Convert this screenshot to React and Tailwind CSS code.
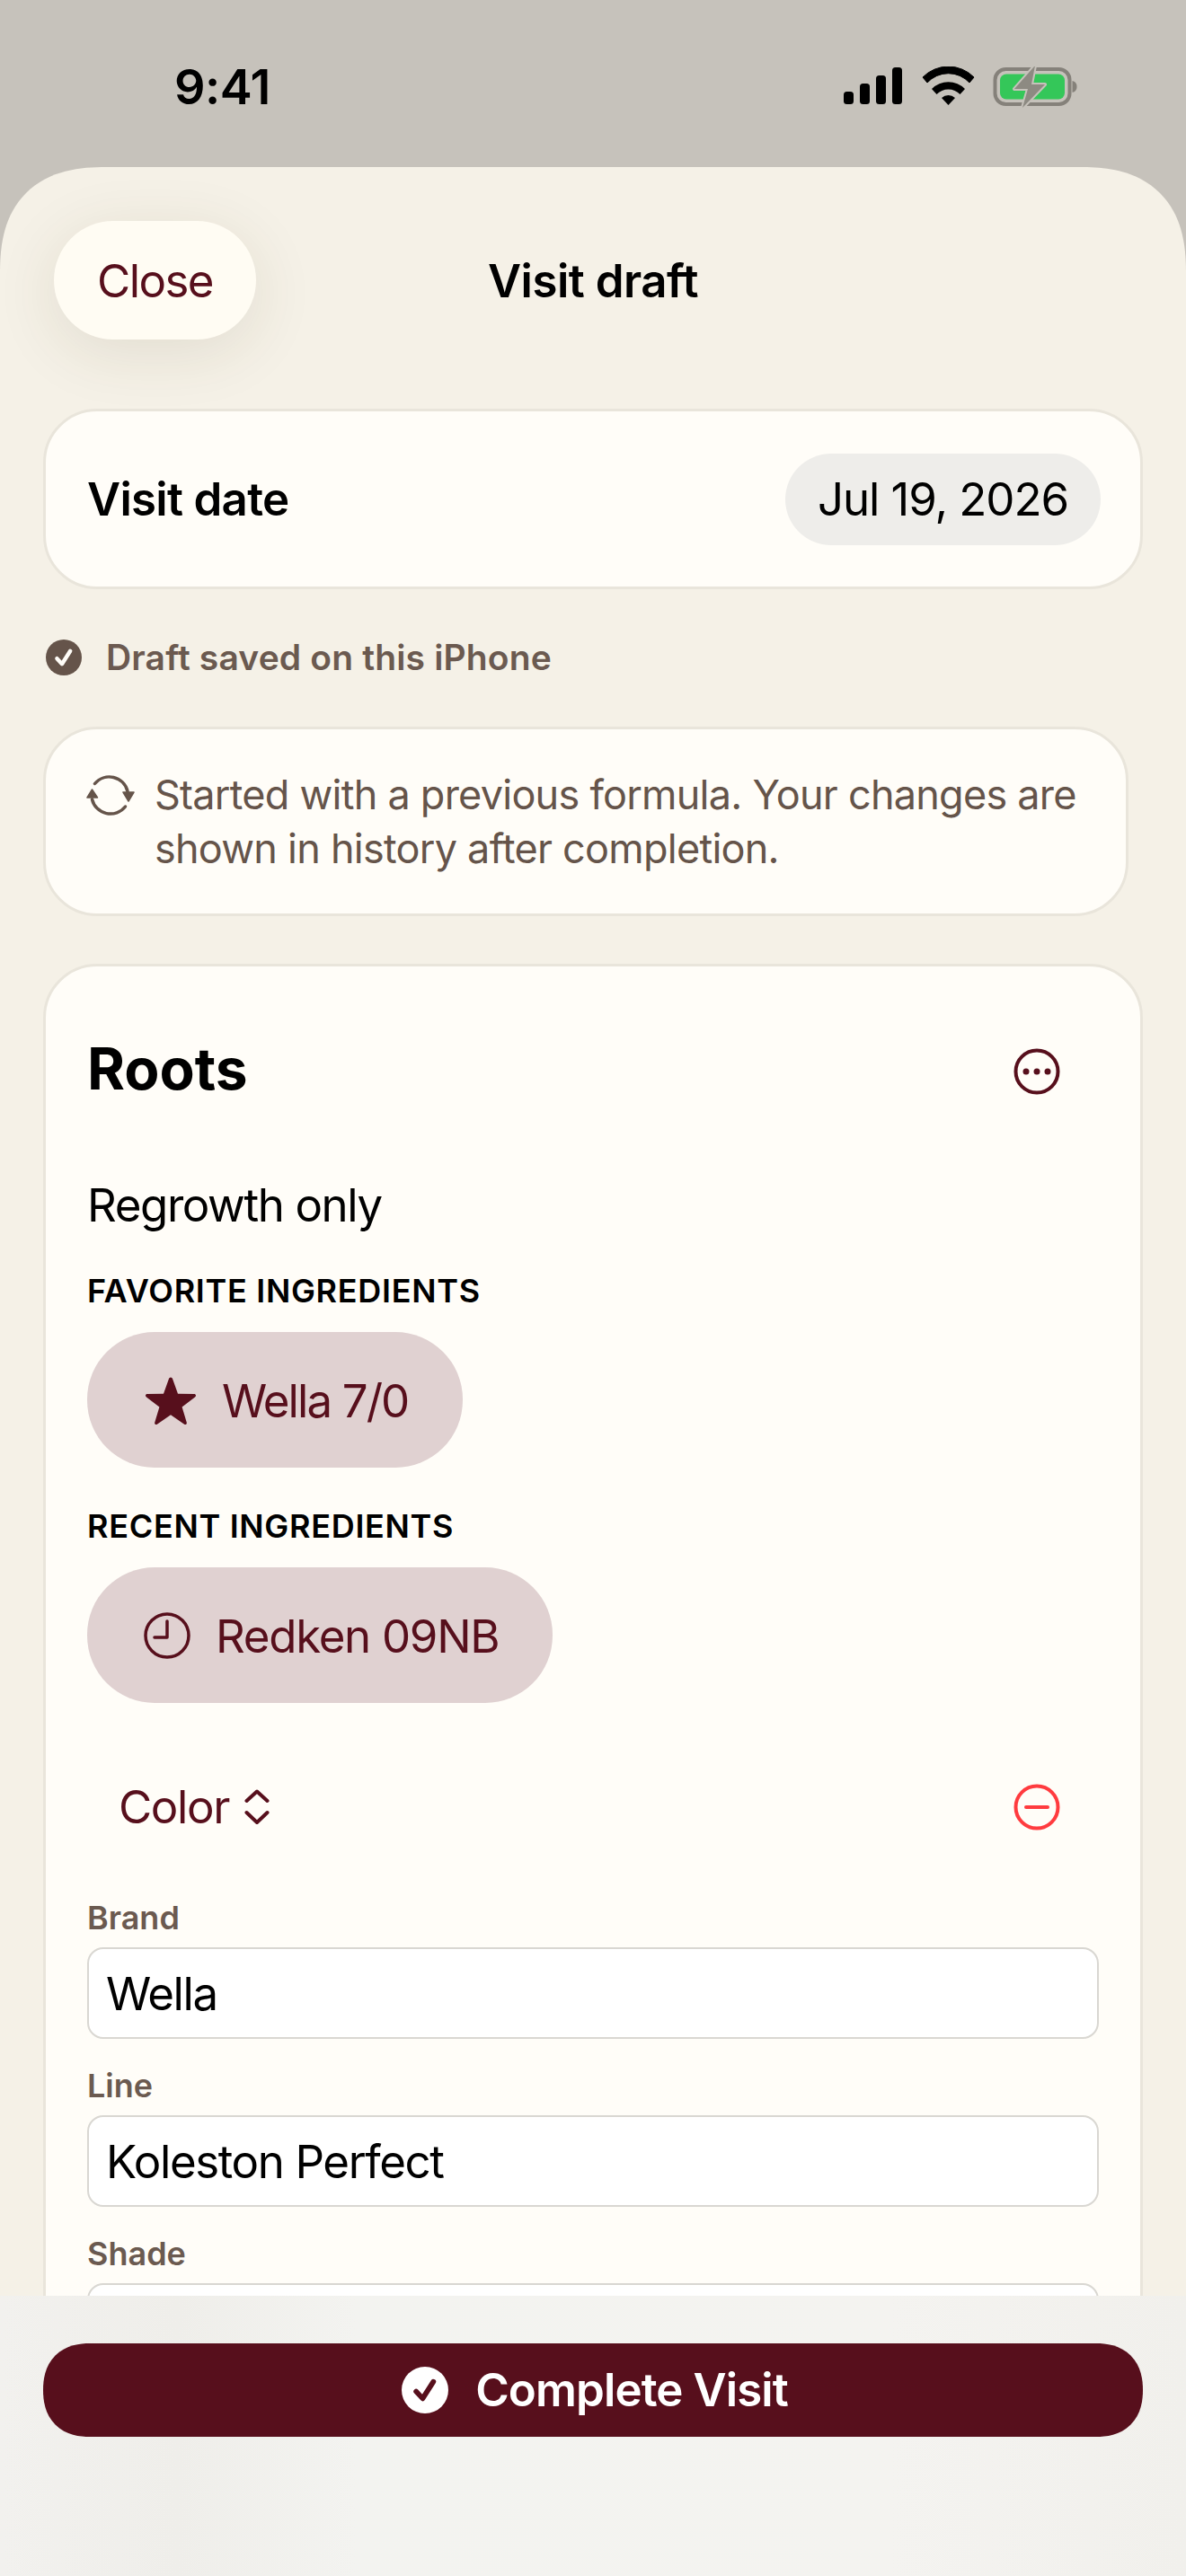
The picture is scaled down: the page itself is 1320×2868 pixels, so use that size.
const Star = () => (
  <svg width="58" height="56" viewBox="0 0 58 56" className="shrink-0">
    <path d="M29 2.500c1.100 0 1.700.7 2.100 1.800l5.900 16.400 17.900.4c1.200 0 2.100.7 2.100 1.600 0 .8-.5 1.400-1.300 2L41.600 35.500l5.100 16.900c.3 1 .2 1.800-.5 2.300-.7.500-1.500.3-2.400-.3L29 44.300 14.200 54.400c-.9.600-1.700.8-2.400.3-.7-.5-.8-1.300-.5-2.300l5.100-16.900L2.300 24.700c-.8-.6-1.300-1.200-1.300-2 0-.9.900-1.600 2.100-1.600l17.900-.4 5.900-16.400c.4-1.100 1-1.800 2.100-1.800z" fill="#570f1c" />
  </svg>
);

const Check = ({ size, bg, fg, sw }) => (
  <svg width={size} height={size} viewBox="0 0 50 50" className="shrink-0">
    <circle cx="25" cy="25" r="25" fill={bg} />
    <path d="M15.500 26.500 L22.500 34 L34 16" fill="none" stroke={fg} strokeWidth={sw} strokeLinecap="round" strokeLinejoin="round" />
  </svg>
);

const Field = ({ label, value }) => (
  <div className="mb-[30px]">
    <div className="h-[44px] text-[36px] leading-[44px] font-semibold text-[#6b5a50]">{label}</div>
    <div className="mt-[11px] h-[102px] flex items-center pl-[19px] pt-[3px] bg-white border-[2px] border-[#d9d7d2] rounded-[18px] text-[51px] tracking-[-1.4px] text-black">{value}</div>
  </div>
);

export default function App() {
  return (
    <div className="relative w-[1320px] h-[2868px] overflow-hidden bg-[#c6c2bb] font-['Inter',sans-serif] text-black">
      {/* status bar */}
      <div className="h-[186px] flex justify-between pt-[70px] pl-[194px] pr-[117px]">
        <div className="text-[54px] leading-[54px] font-semibold h-[54px] tracking-[-0.5px]">9:41</div>
        <svg width="264" height="46" viewBox="0 0 264 46" className="mt-[4px]">
          <rect x="0" y="28" width="11" height="14" rx="3.500" fill="#000" />
          <rect x="18" y="19" width="11" height="23" rx="3.500" fill="#000" />
          <rect x="36" y="10" width="11" height="32" rx="3.500" fill="#000" />
          <rect x="54" y="1" width="11" height="41" rx="3.500" fill="#000" />
          <path d="M88 14 A40 40 0 0 1 145 14 L140 20 A32 32 0 0 0 93 20 Z" transform="translate(0 -2)" fill="#000" stroke="#000" strokeWidth="1" />
          <path d="M98 25 A26 26 0 0 1 135 25 L129.500 31 A18 18 0 0 0 103.500 31 Z" fill="#000" />
          <path d="M109 35 A11 11 0 0 1 124 35 L116.500 43 Z" fill="#000" />
          <rect x="168.500" y="3" width="83" height="39" rx="12" fill="none" stroke="#85817a" strokeWidth="4" />
          <rect x="174" y="8.500" width="72" height="28" rx="7" fill="#34c759" />
          <path d="M254.500 16 C258.500 17 259.500 20 259.500 22.500 C259.500 25 258.500 28 254.500 29 Z" fill="#85817a" />
          <path d="M213 -1 L190 25 L205 25 L199 46 L224 20 L209 20 Z" fill="#8d8a82" stroke="#c6c2bb" strokeWidth="4" strokeLinejoin="round" paintOrder="stroke" />
        </svg>
      </div>

      {/* sheet */}
      <div className="h-[2682px] bg-[#f5f1e7] rounded-t-[118px] [corner-shape:superellipse(1.3)] px-[48px] overflow-hidden">
        <div className="pt-[60px] h-[269px] grid grid-cols-[1fr_auto_1fr] items-start">
          <div className="ml-[12px] w-[225px] h-[132px] rounded-[66px] bg-[#fffcf3] shadow-[0_14px_70px_rgba(70,60,30,0.11)] flex items-center justify-center pt-[2px] text-[51px] tracking-[-1.6px] text-[#570f1c]">Close</div>
          <div className="h-[132px] flex items-center pt-[2px] text-[51px] font-semibold tracking-[-0.5px]">Visit draft</div>
          <div />
        </div>

        <div className="h-[201px] bg-[#fffdf8] border-[3px] border-[#e9e5db] rounded-[60px] flex items-center justify-between pl-[46px] pr-[44px]">
          <div className="text-[51px] font-semibold tracking-[-0.7px] pt-[1px]">Visit date</div>
          <div className="h-[102px] w-[351px] rounded-full bg-[#eeedea] flex items-center justify-center text-[51px] tracking-[-1.1px] pt-[1px]">Jul 19, 2026</div>
        </div>

        <div className="mt-[55px] h-[42px] flex items-center pl-[3px] gap-[27px]">
          <Check size={40} bg="#65544a" fg="#fffdf8" sw="5.500" />
          <div className="text-[39px] font-semibold text-[#6b5a50] tracking-[0.15px]">Draft saved on this iPhone</div>
        </div>

        <div className="mt-[56px] w-[1208px] h-[211px] bg-[#fffdf8] border-[3px] border-[#e9e5db] rounded-[60px] flex items-start pl-[45px] pt-[50px] gap-[22px]">
          <svg width="54" height="46" viewBox="0 0 54 46" className="shrink-0 mt-[1px]" fill="none" stroke="#65544a" strokeWidth="3.500" strokeLinecap="round">
            <path d="M9.500 9.500 A21 21 0 0 1 46 18" />
            <path d="M6.500 27 A21 21 0 0 0 43.500 35" />
            <path d="M1 25 H12.500 L6.500 16 Z" fill="#65544a" strokeWidth="1.500" strokeLinejoin="round" />
            <path d="M41 19 H53 L47 29 Z" fill="#65544a" strokeWidth="1.500" strokeLinejoin="round" />
          </svg>
          <div className="text-[45px] leading-[60px] text-[#65544a] -mt-[7px] tracking-[-0.75px]">
            Started with a previous formula. Your changes are<br />shown in history after completion.
          </div>
        </div>

        <div className="mt-[53px] bg-[#fffdf8] border-[3px] border-[#e9e5db] rounded-[60px] pl-[46px] pr-[46px] pt-[74px] pb-[60px]">
          <div className="h-[80px] flex items-center justify-between">
            <div className="text-[64px] leading-[80px] font-bold">Roots</div>
            <svg width="54" height="54" viewBox="0 0 54 54" className="mr-[42px] mt-[6px]" fill="#570f1c">
              <circle cx="27" cy="27" r="23.500" fill="none" stroke="#570f1c" strokeWidth="4" />
              <circle cx="15" cy="27" r="3.500" />
              <circle cx="27" cy="27" r="3.500" />
              <circle cx="39" cy="27" r="3.500" />
            </svg>
          </div>
          <div className="mt-[82px] h-[60px] text-[51px] leading-[60px] tracking-[-1.4px]">Regrowth only</div>

          <div className="mt-[43px] h-[44px] text-[36px] leading-[44px] font-semibold tracking-[0.7px]">FAVORITE INGREDIENTS</div>
          <div className="mt-[24px] w-[418px] h-[151px] rounded-[75px] bg-[#e0d1d1] flex items-center pl-[64px] gap-[28px] text-[51px] tracking-[-1.9px] text-[#570f1c]">
            <Star />
            <span className="pt-[3px]">Wella 7/0</span>
          </div>

          <div className="mt-[43px] h-[44px] text-[36px] leading-[44px] font-semibold tracking-[0.7px]">RECENT INGREDIENTS</div>
          <div className="mt-[24px] w-[518px] h-[151px] rounded-[75px] bg-[#e0d1d1] flex items-center pl-[63px] gap-[28px] text-[51px] tracking-[-1.3px] text-[#570f1c]">
            <svg width="52" height="52" viewBox="0 0 52 52" className="shrink-0" fill="none" stroke="#570f1c" strokeWidth="3.500" strokeLinecap="round" strokeLinejoin="round">
              <circle cx="26" cy="26" r="24" />
              <path d="M26 10 V28 H12" />
            </svg>
            <span className="pt-[3px]">Redken 09NB</span>
          </div>

          <div className="mt-[86px] h-[60px] flex items-center justify-between">
            <div className="flex items-center pl-[35px] gap-[17px] text-[51px] tracking-[-1.4px] text-[#570f1c]">
              <span>Color</span>
              <svg width="28" height="40" viewBox="0 0 28 40" fill="none" stroke="#570f1c" strokeWidth="4" strokeLinecap="round" strokeLinejoin="round">
                <path d="M2.500 13 L14 2.500 L25.500 13" />
                <path d="M2.500 26 L14 37 L25.500 26" />
              </svg>
            </div>
            <svg width="54" height="54" viewBox="0 0 54 54" className="mr-[42px]" fill="none" stroke="#ff3b3f" strokeWidth="4" strokeLinecap="round">
              <circle cx="27" cy="27" r="23.500" />
              <path d="M15 27 H39" />
            </svg>
          </div>

          <div className="mt-[71px]">
            <Field label="Brand" value="Wella" />
            <Field label="Line" value="Koleston Perfect" />
            <Field label="Shade" value="7/0" />
          </div>
        </div>
      </div>

      {/* footer bar */}
      <div className="absolute left-0 right-0 bottom-0 h-[312px] bg-[linear-gradient(90deg,#f2f1ee_0%,#efeeea_15%,#f3f3f0_30%,#f4f3f0_75%,#f1f0ec_100%)] px-[48px] pt-[53px]">
        <div className="h-[104px] rounded-[52px] [corner-shape:superellipse(1.2)] bg-[#570f1c] flex items-center justify-center gap-[30px] pl-[4px] text-white text-[51px] font-semibold tracking-[-0.9px]">
          <Check size={52} bg="#ffffff" fg="#570f1c" sw="5.500" />
          <span>Complete Visit</span>
        </div>
      </div>
    </div>
  );
}
